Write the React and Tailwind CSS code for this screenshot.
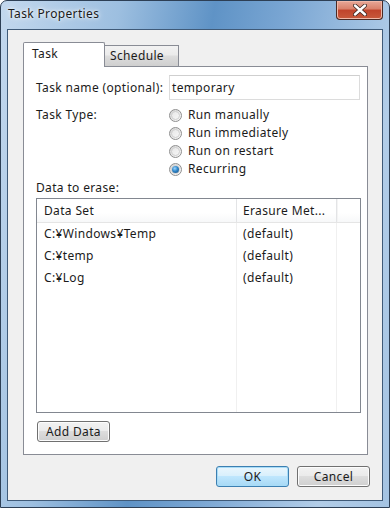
import React from "react";

const font = { fontFamily: '"Noto Sans", "Liberation Sans", sans-serif' };

function Radio({ checked, label }) {
  return (
    <div className="flex items-center h-[18px]">
      <div className="relative w-[13px] h-[13px] rounded-full border border-[#8f8f8f] bg-gradient-to-br from-[#d4d4d4] to-[#fbfbfb] flex items-center justify-center">
        <div className="w-[9px] h-[9px] rounded-full bg-gradient-to-br from-[#e8e8e8] to-[#f6f6f6] border border-[#cfcfcf] flex items-center justify-center">
          {checked && (
            <div className="w-[7px] h-[7px] rounded-full bg-[radial-gradient(circle_at_40%_35%,#9fd6ff_0%,#2f86c8_45%,#14487a_100%)]" />
          )}
        </div>
      </div>
      <span className="ml-[6px] text-[12px] leading-[18px] text-[#1b1b1b]">{label}</span>
    </div>
  );
}

function Button({ children, w, def }) {
  return (
    <div
      className={
        "h-[21px] rounded-[3px] border flex items-center justify-center text-[12px] text-[#1b1b1b] " +
        (def
          ? "border-[#3c7fb1] shadow-[inset_0_0_0_1px_#a8dcf7] bg-[linear-gradient(#eaf6fd_0%,#d9f0fc_45%,#bee6fd_50%,#a7d9f5_100%)]"
          : "border-[#707070] shadow-[inset_0_0_0_1px_#fcfcfc] bg-[linear-gradient(#f2f2f2_0%,#ebebeb_45%,#dddddd_50%,#cfcfcf_100%)]")
      }
      style={{ width: w }}
    >
      {children}
    </div>
  );
}

export default function App() {
  const rows = [
    ["C:¥Windows¥Temp", "(default)"],
    ["C:¥temp", "(default)"],
    ["C:¥Log", "(default)"],
  ];
  return (
    <div style={font} className="w-[390px] h-[508px] overflow-hidden tracking-[0.35px]">
      <div className="w-[390px] h-[508px] rounded-t-[7px] border border-[#2d3f55] flex flex-col bg-[linear-gradient(100deg,#c3d8ee_0%,#9dbfe0_25%,#5f93c6_45%,#7aa6d3_60%,#b2cde8_85%,#a4c3e2_100%)]">
        {/* title bar */}
        <div className="h-[28px] flex items-start justify-between">
          <div className="pl-[7px] pt-[5px] text-[12px] leading-[16px] text-[#1a1a1a] [text-shadow:0_0_6px_#ffffff,0_0_3px_#ffffff]">
            Task Properties
          </div>
          <div className="mr-[6px] w-[47px] h-[19px] rounded-b-[4px] border border-t-0 border-[#4a2a24] bg-[linear-gradient(#e8a898_0%,#d9806a_45%,#c0432b_50%,#c85a3c_100%)] shadow-[inset_0_0_0_1px_#f0b8a8] flex items-center justify-center">
            <svg width="14" height="12" viewBox="0 0 14 12">
              <path d="M2 1.5 L12 10.5 M12 1.5 L2 10.5" stroke="#3a2420" strokeWidth="4" strokeLinecap="round" />
              <path d="M2 1.5 L12 10.5 M12 1.5 L2 10.5" stroke="#ffffff" strokeWidth="2.4" strokeLinecap="round" />
            </svg>
          </div>
        </div>
        {/* client */}
        <div className="mx-[6px] h-[472px] border border-[#3f5a78] bg-[#f0f0f0] flex flex-col">
          <div className="pl-[15px] pt-[12px]">
            {/* tabs */}
            <div className="flex items-end h-[24px]">
              <div className="relative z-10 w-[82px] h-[25px] -mb-px bg-white border border-b-0 border-[#898c95] rounded-t-[2px] text-[12px] text-[#1b1b1b] pl-[8px] pt-[3px] leading-[16px]">
                Task
              </div>
              <div className="w-[74px] h-[21px] border border-l-0 border-b-0 border-[#898c95] bg-[linear-gradient(#f2f2f2_0%,#ebebeb_45%,#dddddd_50%,#cfcfcf_100%)] text-[12px] leading-[16px] text-[#1b1b1b] pl-[5px] pt-[2px]">
                Schedule
              </div>
            </div>
            {/* pane */}
            <div className="w-[345px] h-[389px] bg-white border border-[#898c95] pl-[12px] pt-[8px] flex flex-col">
              <div className="flex items-center">
                <div className="w-[133px] text-[12px] text-[#1b1b1b]">Task name (optional):</div>
                <div className="w-[191px] h-[25px] border border-[#dcdcdc] border-t-[#cfcfcf] bg-white flex items-center pl-[2px] text-[12px] text-[#1b1b1b]">
                  temporary
                </div>
              </div>
              <div className="flex mt-[6px]">
                <div className="w-[133px] h-[18px] text-[12px] leading-[18px] text-[#1b1b1b]">Task Type:</div>
                <div className="flex flex-col">
                  <Radio label="Run manually" />
                  <Radio label="Run immediately" />
                  <Radio label="Run on restart" />
                  <Radio label="Recurring" checked />
                </div>
              </div>
              <div className="h-[18px] text-[12px] leading-[18px] text-[#1b1b1b] mt-[1px]">Data to erase:</div>
              <div className="mt-[1px] w-[325px] h-[215px] border border-[#828790] bg-white flex flex-col relative">
                <div className="flex h-[24px] border-b border-[#e5e5e5] bg-[linear-gradient(#ffffff_0%,#ffffff_60%,#f7f8f9_100%)] text-[12px] text-[#1b1b1b]">
                  <div className="w-[200px] pl-[7px] flex items-center border-r border-[#e3e4e6]">Data Set</div>
                  <div className="w-[100px] pl-[6px] flex items-center border-r border-[#e3e4e6]">Erasure Met...</div>
                  <div className="flex-1 border-l border-[#f4f4f4]" />
                </div>
                <div className="flex flex-1">
                  <div className="w-[200px] border-r border-[#f0f0f0] flex flex-col">
                    {rows.map((r) => (
                      <div key={r[0]} className="h-[22px] pl-[7px] flex items-center text-[12px] text-[#1b1b1b]">{r[0]}</div>
                    ))}
                  </div>
                  <div className="w-[100px] border-r border-[#f0f0f0] flex flex-col">
                    {rows.map((r) => (
                      <div key={r[0]} className="h-[22px] pl-[6px] flex items-center text-[12px] text-[#1b1b1b]">{r[1]}</div>
                    ))}
                  </div>
                </div>
              </div>
              <div className="mt-[8px] ml-px">
                <Button w="73px">Add Data</Button>
              </div>
            </div>
          </div>
          <div className="flex justify-end gap-[8px] pr-[12px] mt-[11px]">
            <Button w="73px" def>OK</Button>
            <Button w="73px">Cancel</Button>
          </div>
        </div>
      </div>
    </div>
  );
}
